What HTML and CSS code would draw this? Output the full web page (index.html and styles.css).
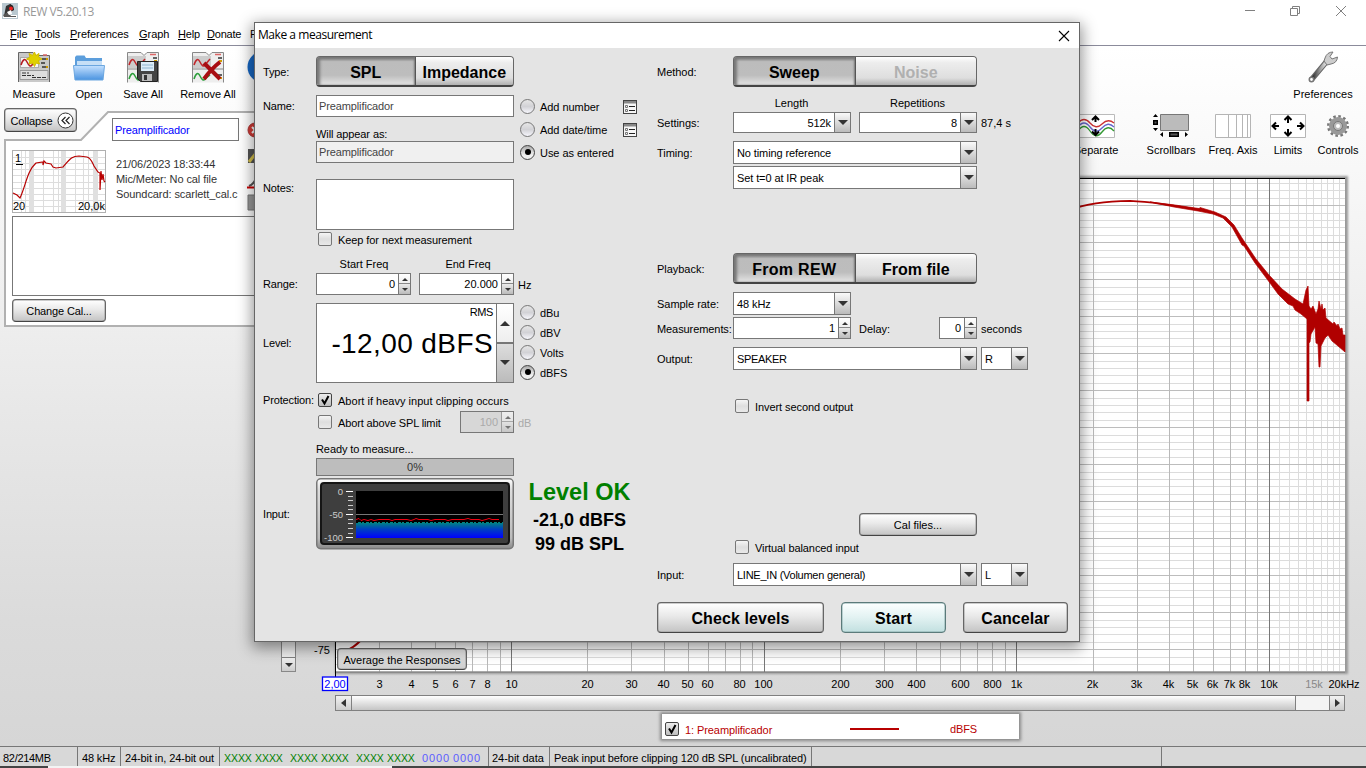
FILE: index.html
```html
<!DOCTYPE html>
<html lang="es">
<head>
<meta charset="utf-8">
<title>REW V5.20.13</title>
<link rel="stylesheet" href="styles.css">
</head>
<body>
<svg class="defs" aria-hidden="true">
  <defs>
    <linearGradient id="blue" x1="0" y1="0" x2="0" y2="1"><stop offset="0" stop-color="#c6e2ff"/><stop offset="1" stop-color="#4a93e0"/></linearGradient>
    <linearGradient id="metal" x1="0" y1="0" x2="1" y2="0"><stop offset="0" stop-color="#333"/><stop offset=".5" stop-color="#999"/><stop offset="1" stop-color="#eee"/></linearGradient>
    <symbol id="sheet" viewBox="0 0 32 32">
      <path d="M.5 31V1.500H15l3 3h13.500V31" fill="#c9c9c9" stroke="#666"/>
      <rect x="2.500" y="6.500" width="18" height="10" fill="#f4f4f4" stroke="#aaa"/>
      <path d="M3 14q3-9 6-3t5 3l5-6" fill="none" stroke="#b4191f" stroke-width="1.500"/>
      <path d="M24 8h4M23 12h4M24 16h4" stroke="#333" stroke-width="1.500"/>
      <path d="M28 8h2M28 16h2" stroke="#d09a00" stroke-width="2"/>
      <path d="M25 4h4" stroke="#d66" stroke-width="1.500"/>
    </symbol>
    <symbol id="sheets" viewBox="0 0 32 32">
      <path d="M.5 31.500V1.500H14l3 3 3-3h11.500v30" fill="#eee" stroke="#888"/>
      <rect x="1" y="5" width="18" height="12" fill="#ccc"/>
      <path d="M2 14q3-9 6-3t5 3l5-6" fill="none" stroke="#c0262b" stroke-width="1.500"/>
      <path d="M1 18h30" stroke="#888"/>
      <path d="M2 28q3-9 6-3t5 3l5-4" fill="none" stroke="#2b9e3a" stroke-width="1.500"/>
      <path d="M26 7h4M26 24h4" stroke="#333" stroke-width="1.500"/>
      <path d="M27 10h3M27 27h3" stroke="#d09a00" stroke-width="2"/>
      <path d="M23 3.500h6" stroke="#d66" stroke-width="1.500"/>
    </symbol>
    <symbol id="list" viewBox="0 0 14 14">
      <rect x=".5" y=".5" width="13" height="13" fill="#f6f6f6" stroke="#444"/>
      <rect x="1" y="1" width="12" height="2.500" fill="#888"/>
      <path d="M2.500 5.500h2v2h-2zM2.500 9.500h2v2h-2z" fill="none" stroke="#777"/>
      <path d="M6 6.500h6M6 10.500h6" stroke="#222"/>
    </symbol>
    <symbol id="tick" viewBox="0 0 15 15"><path d="M4 6.500L6.500 10.500 10.500 3" fill="none" stroke="#000" stroke-width="2"/></symbol>
  </defs>
</svg>

<div class="window">
  <header class="titlebar">
    <svg class="app-icon" width="16" height="16" viewBox="0 0 16 16"><rect width="16" height="16" fill="#b9c8d0"/><path d="M4 3l4-2 3 2 1 4-6 3-4 3 1-5z" fill="#333"/><path d="M8 1l3 2 1 4-3 1z" fill="#222"/><circle cx="9" cy="5.500" r="2" fill="#e22"/><path d="M1 12h14v3H1z" fill="#fff"/><path d="M1 12l5-3 3 4h5v1H2z" fill="#555"/><path d="M5 9l4-2 1 4-3 1z" fill="#fff"/></svg>
    <span class="app-title">REW V5.20.13</span>
    <svg class="win-buttons" width="106" height="14" viewBox="0 0 106 14" fill="none" stroke="#808080"><path d="M1 5.500h10M46.500 3.500h7v7h-7zM48.500 3V1.500h7v7h-2M92 1l10 10M102 1L92 11"/></svg>
  </header>
  <nav class="menubar">
    <span><u>F</u>ile</span><span><u>T</u>ools</span><span><u>P</u>references</span><span><u>G</u>raph</span><span><u>H</u>elp</span><span><u>D</u>onate</span><span>P</span>
  </nav>

  <main class="workspace">
    <div class="toolbar">
      <div class="tool t1"><svg width="32" height="32"><use href="#sheet"/><path d="M2 19.500h28v9H2z" fill="#dedede" stroke="#999"/><path d="M4 22h7M4 24.500h12M14 26.500h14" stroke="#333" stroke-dasharray="4 1"/><path d="M16.500 1l1.300 3.500L21 2.500l-.5 3.500 3.500 2-3.500 1.500 1 3.500-3.500-1-1.500 3.500-2-3.500-3.500 1 1-3.500L8.500 8 12 6l-1-3.500 3.500 2z" fill="#dfd000" stroke="#d3bd00" stroke-width="1"/></svg><span>Measure</span></div>
      <div class="tool t2"><svg width="32" height="32"><path d="M2 27V6l1.500-1.500h8L13 7h16v8z" fill="#5c9edc"/><path d="M4 10h25v5H4z" fill="#c6dff6"/><path d="M.5 14.500h31L30 29H2z" fill="url(#blue)" stroke="#6ba6df"/></svg><span>Open</span></div>
      <div class="tool t3"><svg width="32" height="32"><use href="#sheets"/><path d="M10.500 10.500h20v20h-17l-3-3z" fill="#444" stroke="#222"/><path d="M14 11h13v9H14z" fill="#dcecf8"/><path d="M15 14h11M15 17h11" stroke="#8fb4d0"/><path d="M15 23h10v7H15z" fill="#bbb"/><path d="M17 24h3v5h-3z" fill="#333"/></svg><span>Save All</span></div>
      <div class="tool t4"><svg width="32" height="32"><use href="#sheets"/><path d="M12 12L28 28M28 11Q19 18 12 28" stroke="#a80d12" stroke-width="4" fill="none"/></svg><span>Remove All</span></div>
      <div class="tool t5"><svg width="32" height="32"><circle cx="16" cy="16" r="15.500" fill="#1766c2"/></svg><span>I</span></div>
      <div class="tool tp"><svg width="32" height="32"><path d="M5 28L20 10" stroke="#666" stroke-width="5.500" stroke-linecap="round"/><path d="M6 27L20 10" stroke="url(#metal)" stroke-width="3.500"/><path d="M18 7Q20 1 26 1l-3 4.500 2 2.500 5.500-2Q30 12 24 13l-4 1-3-4z" fill="#ccc" stroke="#777"/><circle cx="4.500" cy="28.500" r="2.200" fill="#fff" stroke="#777" stroke-width="1.600"/></svg><span>Preferences</span></div>
    </div>

    <div class="content">
      <aside class="side">
        <svg class="tab-shape" width="260" height="222" viewBox="0 0 260 222"><path d="M5 218V32h76l27-28h160v214z" fill="#fff" stroke="#b1b1b1" stroke-width="2"/></svg>
        <div class="side-head">
          <button class="btn collapse">Collapse <svg width="17" height="17" viewBox="0 0 17 17"><circle cx="8.500" cy="8.500" r="7.500" fill="#fff" stroke="#333"/><path d="M8.500 5L5 8.500 8.500 12M12.500 5L9 8.500l3.500 3.500" fill="none" stroke="#222" stroke-width="1.200"/></svg></button>
          <div class="m-name">Preamplificador</div>
        </div>
        <div class="m-row">
          <svg class="thumb" width="94" height="63" viewBox="0 0 94 63">
            <rect x=".5" y=".5" width="93" height="62" fill="#fff" stroke="#b0b0b0"/>
            <path d="M1 7.500h92M1 13.500h92M1 19.500h92M1 25.500h92M1 32.500h92M1 38.500h92M1 44.500h92M1 50.500h92M1 56.500h92M9.500 1v61M13.500 1v61M31.500 1v61M41.500 1v61M46.500 1v61M63.500 1v61M71.500 1v61M76.500 1v61" stroke="#ddd"/>
            <path d="M19.500 1v61M51.500 1v61M83.500 1v61" stroke="#e0e0e0" stroke-width="5"/>
            <path d="M1 43l4 2 3 3C14 35 15 21 24 13l7-1v3l1-4 2 2 5 1 2 3 3 1 7-1C58 9 60 6 67 6l8 1c4 1 5 5 7 9l4 6 2 1v17l1-19 1 9 1-6 1 7 1 1" fill="none" stroke="#b80000" stroke-width="1.200"/>
            <g font-family="Liberation Sans, sans-serif" font-size="11"><text x="3" y="12">1</text><text x="1" y="60">20</text><text x="66" y="60">20,0k</text></g><path d="M4 14.500h7" stroke="#000"/>
          </svg>
          <div class="m-info"><span>21/06/2023 18:33:44</span><span>Mic/Meter: No cal file</span><span>Soundcard: scarlett_cal.c</span></div>
          <svg class="m-icons" width="14" height="92" viewBox="0 0 14 92"><circle cx="8" cy="9" r="7" fill="#d53a35" stroke="#a33"/><path d="M5 6l6 6M11 6l-6 6" stroke="#fff" stroke-width="2"/><path d="M1 28h13v14H1z" fill="#555"/><path d="M2 41l11-14" stroke="#d8c34d" stroke-width="3"/><path d="M2 65q5-2 7-8" fill="none" stroke="#555" stroke-width="2"/><path d="M0 66.500h14" stroke="#c00" stroke-width="2"/><path d="M1 74h13v15H1z" fill="#999" stroke="#777"/></svg>
        </div>
        <div class="m-notes"></div>
        <button class="btn change">Change Cal...</button>
        <div class="vscroll"><i class="down"></i></div>
      </aside>

      <section class="graph">
        <div class="graph-tools">
          <div class="tool"><svg width="38" height="26"><path d="M.5 1.500h37v23H.5z" fill="#fff" stroke="#bbb"/><path d="M1 10q6-7 12 0t12 1 12-1" fill="none" stroke="#c33" stroke-width="1.300"/><path d="M1 14q6-8 12 0t12 1 12-1" fill="none" stroke="#66c" stroke-width="1.300"/><path d="M1 18q6-9 12 0t12 1 12-1" fill="none" stroke="#393" stroke-width="1.300"/><path d="M18.500 9V4M15 7l3.500-3.500L22 7M18.500 16v6M15 18.500l3.500 3.500 3.500-3.500" fill="none" stroke="#000" stroke-width="2"/></svg><span>Separate</span></div>
          <div class="tool"><svg width="38" height="26"><path d="M8.500 1.500h28v16h-28z" fill="#bbb" stroke="#777"/><path d="M1 4l2.500-3L6 4zM1 15l2.500 3L6 15zM11 19v5l-3-2.500zM33 19v5l3-2.500zM1 7h5v5H1zM17 19h10v5H17z" fill="#000"/><path d="M2.500 8.500h2v2h-2zM18.500 20.500h7v2h-7z" fill="#555"/></svg><span>Scrollbars</span></div>
          <div class="tool"><svg width="36" height="26"><path d="M.5 1.500h35v23H.5zM13.500 2v22M21.500 2v22M27.500 2v22M32.500 2v22" fill="#fff" stroke="#b5b5b5"/></svg><span>Freq. Axis</span></div>
          <div class="tool"><svg width="36" height="26"><path d="M.5 1.500h35v23H.5z" fill="#fff" stroke="#b5b5b5"/><path d="M18 10V4M14.500 7L18 3.500 21.500 7M18 16v6M14.500 19l3.500 3.500 3.500-3.500M9 13H3M6 9.500L2.500 13 6 16.500M27 13h6M30 9.500l3.500 3.500-3.500 3.500" fill="none" stroke="#000" stroke-width="2"/></svg><span>Limits</span></div>
          <div class="tool"><svg width="24" height="26" viewBox="0 0 24 26"><circle cx="12" cy="13" r="9.700" fill="none" stroke="#777" stroke-width="2.600" stroke-dasharray="2.540 2.540"/><circle cx="12" cy="13" r="6.500" fill="#ddd" stroke="#999" stroke-width="5"/><circle cx="12" cy="13" r="4.500" fill="#bbb" stroke="#777"/><circle cx="12" cy="13" r="2" fill="#fff"/></svg><span>Controls</span></div>
        </div>
        <div class="plot-wrap">
          <svg class="plot" width="1066" height="526" viewBox="300 170 1066 526">
            <defs>
              <pattern id="rows" x="0" y="205" width="37" height="37" patternUnits="userSpaceOnUse"><path d="M0 8.500h37M0 15.500h37M0 22.500h37M0 30.500h37" stroke="#dcdcdc"/><path d="M0 .5h37" stroke="#bdbdbd"/></pattern>
              <filter id="soft" x="-5%" y="-5%" width="110%" height="110%"><feGaussianBlur stdDeviation="1.200"/></filter>
            </defs>
            <rect x="335" y="176" width="1013" height="498" fill="#999" filter="url(#soft)"/>
            <rect x="336" y="178" width="1009" height="494" fill="#fff"/>
            <path d="M1279.500 178v494M1289.500 178v494M1298.500 178v494M1306.500 178v494M1313.500 178v494M1321.500 178v494M1327.500 178v494M1333.500 178v494M1339.500 178v494" stroke="#dcdcdc"/>
            <rect x="336" y="178" width="1009" height="494" fill="url(#rows)"/>
            <path d="M379.500 178v494M411.500 178v494M435.500 178v494M455.500 178v494M472.500 178v494M487.500 178v494M500.500 178v494M587.500 178v494M631.500 178v494M664.500 178v494M688.500 178v494M708.500 178v494M725.500 178v494M740.500 178v494M752.500 178v494M840.500 178v494M884.500 178v494M916.500 178v494M940.500 178v494M960.500 178v494M977.500 178v494M992.500 178v494M1005.500 178v494M1093.500 178v494M1137.500 178v494M1169.500 178v494M1193.500 178v494M1213.500 178v494M1230.500 178v494M1245.500 178v494M1257.500 178v494" stroke="#b9b9b9"/>
            <path d="M511.500 178v494M764.500 178v494M1016.500 178v494M1269.500 178v494" stroke="#777"/>
            <path d="M336 178.500h1009" stroke="#000"/><path d="M335.500 178v506" stroke="#000"/><path d="M336 672h1009" stroke="#777"/>
            <path d="M345 651q9-3 17-12" fill="none" stroke="#b00000" stroke-width="2"/>
            <path d="M1070 210Q1092 201 1130 200.800Q1157 202 1200 210" fill="none" stroke="#b00000" stroke-width="1.800"/>
            <path d="M1150 202L1175 205 1199 208.500 1200 207.500 1215 212 1226 217 1234 225 1242 238 1256 259 1269 275 1282 289 1295 299 1303 304 1306 290 1308 286 1309 306 1311 309 1313 306 1316 314 1318 309 1319 301 1321 309 1322 304 1323 310 1325 308 1326 318 1333 324 1334 322 1337 326 1338 324 1340 329 1342 328 1343 335 1345 335V352L1338 346 1332 341 1328 335 1325 338 1323 342 1321 346 1320 367 1319 367 1318 344 1316 343 1315 327 1311 334 1310 342 1309 343V401H1307V319L1301 314 1295 310 1293 306 1288 304 1278 294 1267 279 1255 263 1244 246 1242 245 1232 227 1223 218 1213 214 1198 211 1174 207z" fill="#b00000" stroke="#b00000" stroke-width=".7"/>
            <g class="ticks">
              <text x="322" y="654" text-anchor="middle">-75</text>
              <rect x="322.500" y="677" width="25" height="13.500" fill="#fff" stroke="#00f" stroke-width="1.300"/><text x="335" y="688" text-anchor="middle" fill="#00f">2,00</text>
              <g text-anchor="middle">
              <text x="379.500" y="688">3</text><text x="411.500" y="688">4</text><text x="435.500" y="688">5</text><text x="455.500" y="688">6</text><text x="472.500" y="688">7</text><text x="487.500" y="688">8</text><text x="511.500" y="688">10</text><text x="587.500" y="688">20</text><text x="631.500" y="688">30</text><text x="663.500" y="688">40</text><text x="687.500" y="688">50</text><text x="707.500" y="688">60</text><text x="739.500" y="688">80</text><text x="763.500" y="688">100</text><text x="840.500" y="688">200</text><text x="884.500" y="688">300</text><text x="916.500" y="688">400</text><text x="960.500" y="688">600</text><text x="992.500" y="688">800</text><text x="1016.500" y="688">1k</text><text x="1092.500" y="688">2k</text><text x="1136.500" y="688">3k</text><text x="1168.500" y="688">4k</text><text x="1192.500" y="688">5k</text><text x="1212.500" y="688">6k</text><text x="1229.500" y="688">7k</text><text x="1244.500" y="688">8k</text><text x="1269" y="688">10k</text><text x="1314" y="688" fill="#888">15k</text><text x="1344" y="688">20kHz</text></g>
            </g>
          </svg>
          <button class="btn average">Average the Responses</button>
        </div>
        <div class="hscroll"><i class="left-arrow"></i><b></b><i class="right-arrow"></i></div>
        <div class="legend"><span class="check on"><svg width="15" height="15"><use href="#tick"/></svg></span><span class="l-name">1: Preamplificador</span><i></i><span>dBFS</span></div>
      </section>
    </div>
  </main>

  <footer class="status">
    <span class="s1">82/214MB</span><span class="s2">48 kHz</span><span class="s3">24-bit in, 24-bit out</span>
    <span class="bits"><b>XXXX</b><b>XXXX</b><b class="far">XXXX</b><b>XXXX</b><b class="far">XXXX</b><b>XXXX</b><em class="far">0000</em><em>0000</em></span>
    <span class="s5">24-bit data</span><span class="s6">Peak input before clipping 120 dB SPL (uncalibrated)</span><span class="s7"></span>
  </footer>
  <div class="taskbar"><i></i></div>
</div>

<div class="dialog">
  <header class="dlg-title"><span>Make a measurement</span><svg width="12" height="12" viewBox="0 0 12 12"><path d="M1 1l10 10M11 1L1 11" stroke="#000" stroke-width="1.100"/></svg></header>
  <div class="dlg-body">
    <section class="left">
      <div class="row h31"><label>Type:</label><div class="seg w198"><b class="on">SPL</b><b>Impedance</b></div></div>
      <div class="row name-row">
        <div class="name-grid">
          <label>Name:</label><div class="field dim">Preamplificador</div>
          <span></span><span class="cap">Will appear as:</span>
          <span></span><div class="field dim ro">Preamplificador</div>
        </div>
        <div class="radios r-name">
          <div><i class="radio"></i><span>Add number</span><svg class="list" width="14" height="14"><use href="#list"/></svg></div>
          <div><i class="radio"></i><span>Add date/time</span><svg class="list" width="14" height="14"><use href="#list"/></svg></div>
          <div><i class="radio on"></i><span>Use as entered</span></div>
        </div>
      </div>
      <div class="row notes"><label>Notes:</label><div class="area"></div></div>
      <div class="row indent keep"><span class="check"></span><span>Keep for next measurement</span></div>
      <div class="row caps freq"><span>Start Freq</span><span>End Freq</span></div>
      <div class="row h22"><label>Range:</label><div class="spin w95"><span>0</span><i></i></div><div class="spin w95 gap8"><span>20.000</span><i></i></div><span class="unit">Hz</span></div>
      <div class="row level"><label>Level:</label><div class="lvl"><div><small>RMS</small><strong>-12,00 dBFS</strong></div><i></i></div>
        <div class="radios r-unit"><div><i class="radio"></i><span>dBu</span></div><div><i class="radio"></i><span>dBV</span></div><div><i class="radio"></i><span>Volts</span></div><div><i class="radio on"></i><span>dBFS</span></div></div></div>
      <div class="row prot"><label>Protection:</label><span class="check on"><svg width="15" height="15"><use href="#tick"/></svg></span><span>Abort if heavy input clipping occurs</span></div>
      <div class="row indent h22"><span class="check"></span><span class="abort">Abort above SPL limit</span><div class="spin off"><span>100</span><i></i></div><span class="unit off">dB</span></div>
      <div class="row ready">Ready to measure...</div>
      <div class="progress">0%</div>
      <div class="row meter-row"><label>Input:</label>
        <svg width="198" height="72" viewBox="0 0 198 72">
          <defs><linearGradient id="frame" x1="0" y1="0" x2="0" y2="1"><stop offset="0" stop-color="#fff"/><stop offset=".15" stop-color="#ddd"/><stop offset=".85" stop-color="#bbb"/><stop offset="1" stop-color="#888"/></linearGradient><linearGradient id="sig" x1="0" y1="0" x2="0" y2="1"><stop offset="0" stop-color="#008c7c"/><stop offset=".45" stop-color="#0040c0"/><stop offset="1" stop-color="#00f"/></linearGradient></defs>
          <rect x=".75" y=".75" width="196.500" height="70" rx="4" fill="url(#frame)" stroke="#777" stroke-width="1.500"/>
          <rect x="5" y="5" width="188" height="61" rx="3" fill="#3e3e3e" stroke="#151515" stroke-width="2"/>
          <path d="M40 13h147v47H40z"/><path d="M40 44h147v16H40z" fill="url(#sig)"/><path d="M40 36.500h147" stroke="#777"/>
          <path d="M40 41.500l3-1 2 2 3-1 4 1 3-1 3 1 5-1h10l3 1 3-1h12l4 1 3-1 2-1 3 1h9l3 1 4-1h10l3 1 4-1h12l4-1 3 1h8l3 1 4-1 3-1 3 1h7" fill="none" stroke="#f00010"/>
          <path d="M40 44.500h147" stroke="#000" stroke-dasharray="2 3 1 2"/>
          <path d="M30 13.500h7M30 36.500h7M30 59.500h7" stroke="#fff"/><path d="M32 18.500h5M32 22.500h5M32 27.500h5M32 31.500h5M32 41.500h5M32 45.500h5M32 50.500h5M32 55.500h5" stroke="#ccc"/>
          <g font-family="Liberation Sans, sans-serif" font-size="9.500" fill="#ccc" text-anchor="end"><text x="27" y="17">0</text><text x="27" y="40">-50</text><text x="27" y="63">-100</text></g>
        </svg>
        <div class="reading"><b class="ok">Level OK</b><b>-21,0 dBFS</b><b>99 dB SPL</b></div>
      </div>
    </section>

    <section class="right">
      <div class="row h31"><label>Method:</label><div class="seg w244"><b class="on">Sweep</b><b class="off">Noise</b></div></div>
      <div class="row caps len"><span>Length</span><span>Repetitions</span></div>
      <div class="row h21"><label>Settings:</label><div class="combo num w118"><span>512k</span><i></i></div><div class="combo num w118 gap8"><span>8</span><i></i></div><span class="unit">87,4 s</span></div>
      <div class="row timing"><label>Timing:</label><div class="combo w244"><span>No timing reference</span><i></i></div></div>
      <div class="row ir"><label></label><div class="combo w244"><span>Set t=0 at IR peak</span><i></i></div></div>
      <div class="row h31 playback"><label>Playback:</label><div class="seg w244 wide"><b class="on">From REW</b><b>From file</b></div></div>
      <div class="row rate"><label>Sample rate:</label><div class="combo w118"><span>48 kHz</span><i></i></div></div>
      <div class="row meas"><label>Measurements:</label><div class="spin w118"><span>1</span><i></i></div><span class="delay">Delay:</span><div class="spin w38"><span>0</span><i></i></div><span class="unit">seconds</span></div>
      <div class="row out"><label>Output:</label><div class="combo w244"><span class="caps-text">SPEAKER</span><i></i></div><div class="combo ch"><span>R</span><i></i></div></div>
      <div class="row indent invert"><span class="check"></span><span>Invert second output</span></div>
      <div class="row cal"><button class="btn">Cal files...</button></div>
      <div class="row indent virt"><span class="check"></span><span>Virtual balanced input</span></div>
      <div class="row in"><label>Input:</label><div class="combo w244"><span class="line-in">LINE_IN (Volumen general)</span><i></i></div><div class="combo ch"><span>L</span><i></i></div></div>
      <div class="actions"><button class="btn big levels">Check levels</button><button class="btn big start">Start</button><button class="btn big cancel">Cancelar</button></div>
    </section>
  </div>
</div>
</body>
</html>
```

FILE: styles.css
```css
* { box-sizing: border-box; }
body { margin: 0; width: 1366px; height: 768px; overflow: hidden; position: relative; font: 11px/13px "Liberation Sans", Arial, sans-serif; color: #000; background: #fff; white-space: nowrap; }
.defs { position: absolute; width: 0; height: 0; }
svg { display: block; flex: none; }
button { font: inherit; color: inherit; padding: 0; }
.window { height: 768px; display: flex; flex-direction: column; }

.titlebar { height: 24px; flex: none; display: flex; align-items: center; padding: 0 16px 0 2px; }
.app-icon { margin-top: -2px; }
.app-title { margin-left: 5px; color: #999; font: 12px/16px "Open Sans", sans-serif; letter-spacing: -.42px; flex: 1; }
.win-buttons { margin-top: -1px; }
.menubar { height: 22px; flex: none; display: flex; gap: 9px; padding: 4px 10px 0; border-bottom: 1px solid #8b8b9b; }
.menubar span { letter-spacing: -.05px; }
.menubar span:nth-child(1) { width: 16px; }
.menubar span:nth-child(2) { width: 26px; letter-spacing: -.1px; }
.menubar span:nth-child(3) { width: 60px; }
.menubar span:nth-child(4) { width: 30px; }
.menubar span:nth-child(5) { width: 20px; letter-spacing: -.2px; }
.menubar span:nth-child(6) { width: 34px; letter-spacing: -.2px; }

.workspace { flex: 1; min-height: 0; background: linear-gradient(#fff 0, #f7f7f7 20%, #e8e8e8 52%, #dbdbdb 82%, #d6d6d6 100%); }
.toolbar { height: 62px; display: flex; padding-top: 5px; }
.tool { display: flex; flex-direction: column; align-items: center; }
.tool span { margin-top: 5px; }
.toolbar .tool { flex: none; }
.t1 { width: 68px; }
.t2 { width: 42px; }
.t3 { width: 66px; }
.t4 { width: 64px; }
.t5 { width: 46px; }
.t5 span { margin-left: -14px; }
.tp { width: 66px; margin-left: auto; margin-right: 10px; }
.content { display: flex; height: 638px; }
.side { width: 300px; flex: none; position: relative; }
.tab-shape { position: absolute; left: 0; top: 0; }
.side-head { position: relative; display: flex; height: 34px; }
.btn { border: 1px solid #666; border-bottom-color: #444; border-radius: 4px; background: linear-gradient(#fff, #e9e9e9 45%, #c4c4c4); display: flex; align-items: center; justify-content: center; box-shadow: inset 0 0 0 .5px #999; }
.collapse { width: 73px; height: 24px; margin-left: 4px; gap: 4px; padding: 2px 0 0 3px; letter-spacing: -.1px; }
.collapse svg { margin-top: -2px; }
.m-name { margin: 10px 0 0 35px; width: 127px; height: 23px; border: 1px solid #777; padding: 5px 2px; color: #00f; background: #fff; letter-spacing: -.12px; }
.m-row { position: relative; display: flex; height: 74px; padding: 8px 0 0 12px; }
.m-info { width: 134px; margin: 7px 0 0 10px; display: flex; flex-direction: column; color: #333; line-height: 15px; overflow: hidden; letter-spacing: -.08px; }
.m-icons { margin: -29px 0 0 -3px; }
.m-notes { position: relative; width: 260px; height: 80px; margin-left: 12px; border: 1px solid #777; background: #fff; }
.change { position: relative; width: 94px; height: 23px; margin: 3px 0 0 12px; padding-top: 1px; letter-spacing: -.15px; }
.vscroll { width: 15px; height: 346px; margin: 4px 0 0 281px; border: 1px solid #888; background: #eee; display: flex; align-items: flex-end; position: relative; }

.graph { width: 1066px; flex: none; }
.graph-tools { display: flex; height: 62px; padding: 5px 8px 0 0; justify-content: flex-end; }
.graph-tools .tool:nth-child(1) { width: 48px; margin-right: 26px; }
.graph-tools .tool:nth-child(2) { width: 50px; margin-right: 12px; }
.graph-tools .tool:nth-child(3) { width: 50px; margin-right: 10px; }
.graph-tools .tool:nth-child(4) { width: 36px; margin-right: 12px; margin-left: 2px; }
.graph-tools .tool:nth-child(5) { width: 40px; }
.plot-wrap { position: relative; height: 526px; }
.ticks { font: 11px "Liberation Sans", Arial, sans-serif; }
.average { position: absolute; left: 37px; top: 478px; width: 130px; height: 22px; padding-top: 2px; background: linear-gradient(#e4e4e4, #cfcfcf); }
.hscroll { width: 1010px; height: 16px; margin: -1px 0 0 35px; display: flex; border: 1px solid #808080; background: #f4f4f4; }
.hscroll i, .vscroll i { width: 15px; height: 14px; flex: none; background: linear-gradient(#f2f2f2, #ccc); display: flex; align-items: center; justify-content: center; }
.hscroll b { width: 945px; background: linear-gradient(#fff, #c5c5c5); border: solid #808080; border-width: 0 1px; }
.hscroll .right-arrow { margin-left: auto; border-left: 1px solid #808080; }
.hscroll i::after, .vscroll i::after { content: ""; border: solid transparent; border-width: 4px 5px 4px 0; border-right-color: #333; }
.hscroll .right-arrow::after { border-width: 4px 0 4px 5px; border-left-color: #333; }
.vscroll i { border-top: 1px solid #808080; width: 13px; }
.vscroll i::after { border-width: 4px 4px 0; border-color: #333 transparent transparent; }
.legend { width: 357px; height: 25px; margin: 3px 0 0 362px; background: #fff; display: flex; align-items: center; padding: 5px 0 0 3px; box-shadow: 0 0 3px 2px #888; color: #b80000; letter-spacing: -.1px; }
.legend .l-name { width: 165px; margin-left: 6px; padding-top: 2px; }
.legend i { width: 49px; height: 2px; background: #b80000; margin-right: 51px; }
.legend > span:last-child { padding-top: 1px; }

.status { height: 20px; flex: none; display: flex; border-top: 1px solid #777; background: #d8d8d8; line-height: 23px; }
.status > span { border-right: 1px solid #777; padding-left: 3px; flex: none; }
.status > .s1 { width: 78px; letter-spacing: -.3px; }
.status > .s2 { width: 43px; padding-left: 4px; letter-spacing: -.15px; }
.status > .s3 { width: 99px; padding-left: 4px; letter-spacing: -.1px; }
.status > .bits { width: 269px; display: flex; gap: 3px; padding-left: 4px; }
.bits b, .bits em { width: 28px; font-style: normal; font-weight: normal; color: #008000; font-size: 10.500px; letter-spacing: -.05px; }
.bits em { color: #5b5bff; font-size: 11px; letter-spacing: .9px; }
.bits .far { margin-left: 4px; }
.status > .s5 { width: 61px; letter-spacing: -.02px; }
.status > .s6 { width: 262px; padding-left: 4px; letter-spacing: -.11px; }
.status > .s7 { width: 350px; }
.taskbar { height: 2px; flex: none; background: #444; }
.taskbar i { display: block; margin-left: 48px; width: 344px; height: 2px; background: #f4f4f4; }

.dialog { position: absolute; left: 254px; top: 22px; width: 826px; height: 620px; border: 1px solid #666; background: #e4e4e4; box-shadow: 0 4px 14px 2px rgba(0,0,0,.42); }
.dlg-title { height: 25px; background: #fff; display: flex; justify-content: space-between; align-items: center; padding: 0 9px 0 3px; font: 12px/16px "Open Sans", sans-serif; letter-spacing: -.45px; }
.dlg-title span { margin-top: -2px; }
.dlg-body { display: flex; padding: 8px 0 0 8px; }
.left { width: 394px; flex: none; }
.right { width: 412px; }
.row { display: flex; align-items: center; }
.row > label, .name-grid label { width: 53px; flex: none; letter-spacing: -.15px; }
.row.h31 > label { padding-top: 2px; }
.right .row > label { width: 76px; letter-spacing: -.03px; padding-top: 2px; }
.h31 { height: 31px; }
.h22 { height: 22px; }
.h21 { height: 21px; }
.w198 { width: 198px; }
.w244 { width: 244px; }
.w95 { width: 95px; }
.w118 { width: 118px; }
.w38 { width: 38px; }
.gap8 { margin-left: 8px; }
.seg { height: 31px; display: flex; border: 1px solid #666; border-bottom: 2px solid #444; border-radius: 4px; overflow: hidden; font-size: 16px; box-shadow: inset 0 0 0 1px #999; }
.seg b { flex: 1 1 0; display: flex; align-items: center; justify-content: center; background: linear-gradient(#fff 0, #ededed 20%, #dedede 75%, #b0b0b0); padding-top: 2px; }
.seg b.on { background: linear-gradient(#858585, #bcbcbc 16%, #bdbdbd 65%, #e4e4e4); border-right: 1px solid #555; box-shadow: inset 3px 2px 3px #777, inset -1px 0 2px #777; }
.seg b.off { color: #b0b0b0; }
.wide { letter-spacing: .3px; }
.wide b + b { letter-spacing: 0; }
.field { height: 22px; border: 1px solid #777; background: #fff; padding: 4px 2px; color: #444; letter-spacing: -.12px; }
.field.ro { background: #f0f0f0; }
.name-row { height: 68px; margin-top: 8px; }
.name-grid { display: grid; grid-template-columns: 53px 198px; grid-template-rows: 22px 24px 22px; align-items: center; }
.cap { padding-top: 10px; letter-spacing: -.1px; }
.radios { display: flex; flex-direction: column; }
.radios div { display: flex; align-items: center; }
.radios span { margin-left: 5px; padding-top: 2px; letter-spacing: -.05px; }
.r-name { margin: 1px 0 0 6px; height: 68px; }
.r-name div { height: 22.800px; width: 117px; }
.list { margin-left: auto; }
.radio { width: 15px; height: 15px; flex: none; border: 1px solid #777; border-radius: 50%; background: linear-gradient(#e6e6e6, #d2d2d6 50%, #f6f6fc); display: grid; place-items: center; }
.radio.on { border-color: #444; background: linear-gradient(#aaa, #f0f0f0 70%); }
.radio.on::after { content: ""; width: 6px; height: 6px; border-radius: 50%; background: #000; }
.notes { height: 51px; margin-top: 16px; align-items: flex-start; }
.notes label { margin-top: 3px; }
.area { width: 198px; height: 51px; border: 1px solid #777; background: #fff; }
.check { width: 14px; height: 14px; flex: none; border: 1px solid #777; border-radius: 2px; background: linear-gradient(#f5f5f5, #dedede 50%, #e9e9e9); }
.check.on { border-color: #444; background: linear-gradient(#ececec, #bdbdbd); }
.check svg { margin: -1px; overflow: visible; }
.indent { padding-left: 55px; }
.check + span { margin-left: 6px; padding-top: 2px; letter-spacing: -.08px; }
.prot .check + span { letter-spacing: .02px; }
.keep { height: 16px; margin-top: 1px; }
.caps span { text-align: center; }
.freq { height: 13px; margin: 11px 0 2px; padding-left: 53px; }
.freq span { width: 96px; }
.freq span + span { margin-left: 8px; }
.spin, .combo { display: flex; flex: none; border: 1px solid #777; background: #fff; height: 22px; align-items: center; }
.spin > span { flex: 1; text-align: right; padding-right: 3px; }
.spin > i { width: 12px; height: 20px; border-left: 1px solid #777; background: linear-gradient(#fff, #eee 47%, #888 47%, #888 52%, #e8e8e8 52%, #bbb); display: flex; flex-direction: column; justify-content: space-around; align-items: center; }
.spin > i::before, .lvl > i::before { content: ""; border: solid transparent; border-width: 0 3px 3px; border-bottom-color: #333; }
.spin > i::after, .lvl > i::after { content: ""; border: solid transparent; border-width: 3px 3px 0; border-top-color: #333; }
.unit { margin-left: 4px; padding-top: 2px; }
.level { height: 80px; margin-top: 8px; }
.lvl { width: 198px; height: 80px; display: flex; background: #fff; border: 1px solid #777; }
.lvl div { flex: 1; display: flex; flex-direction: column; text-align: right; padding: 2px 3px 0 0; }
.lvl small { font-size: 11px; letter-spacing: -.4px; }
.lvl strong { font: 28px/32px "Liberation Sans", sans-serif; margin-top: 9px; letter-spacing: .4px; }
.lvl > i { width: 17px; border-left: 1px solid #777; background: linear-gradient(#fff, #eee 49%, #777 49%, #777 51%, #ddd 51%, #bbb); display: flex; flex-direction: column; justify-content: space-around; align-items: center; }
.lvl > i::before { border-width: 0 5px 5px; }
.lvl > i::after { border-width: 5px 5px 0; }
.r-unit { margin: -2px 0 0 6px; }
.r-unit div { height: 20px; }
.prot { height: 16px; margin-top: 9px; margin-bottom: 3px; }
.row.prot > .check { margin-left: 2px; }
.indent .abort { flex: none; width: 122px; letter-spacing: -.13px; }
.spin.off { width: 54px; background: #d7d7d7; color: #aaa; }
.spin.off > i { opacity: .6; }
.unit.off { color: #aaa; }
.ready { height: 13px; padding-left: 53px; margin-top: 10px; letter-spacing: -.08px; }
.progress { width: 198px; height: 18px; margin: 2px 0 0 53px; border: 1px solid #777; background: #bdbdbd; color: #333; text-align: center; line-height: 17px; }
.meter-row { height: 72px; margin-top: 2px; }
.reading { width: 131px; display: flex; flex-direction: column; align-items: center; font-size: 18px; line-height: 24px; padding-top: 4px; }
.ok { font-size: 23.500px; color: #008000; line-height: 31px; }

.len { height: 13px; margin: 10px 0 2px; padding-left: 76px; }
.len span { width: 117px; }
.len span + span { margin-left: 9px; }
.combo { height: 23px; }
.combo > span { flex: 1; padding-left: 3px; padding-top: 2px; letter-spacing: -.1px; }
.combo > .line-in { letter-spacing: -.25px; }
.combo > .caps-text { letter-spacing: -.35px; }
.combo > i { width: 16px; height: 100%; border-left: 1px solid #777; background: linear-gradient(#fafafa, #bbb); display: grid; place-items: center; }
.combo > i::after { content: ""; border: solid transparent; border-width: 5px 5px 0; border-top-color: #333; }
.combo.num { height: 21px; }
.num > span { text-align: right; padding-right: 3px; }
.timing { height: 23px; margin-top: 8px; }
.ir { height: 23px; margin-top: 2px; }
.playback { margin-top: 64px; }
.rate { height: 23px; margin-top: 8px; }
.meas { height: 22px; margin-top: 2px; }
.right .meas > label { letter-spacing: -.08px; }
.delay { width: 80px; margin-left: 8px; padding-top: 2px; }
.out { height: 23px; margin-top: 8px; }
.ch { width: 47px; margin-left: 4px; }
.right .indent { padding-left: 78px; }
.invert { height: 16px; margin-top: 28px; }
.cal { height: 23px; margin-top: 99px; padding-left: 202px; }
.cal .btn { width: 118px; height: 23px; padding-top: 2px; }
.virt { height: 16px; margin-top: 3px; }
.in { height: 23px; margin-top: 8px; }
.actions { display: flex; margin-top: 16px; height: 31px; }
.big { height: 31px; font-weight: bold; font-size: 16px; letter-spacing: .1px; padding-top: 2px; }
.levels { width: 167px; margin-right: 17px; }
.start { width: 105px; margin-right: 17px; border-color: #5b7a7a; background: linear-gradient(#fcffff, #e2f2f2 50%, #c2e0e0); box-shadow: inset 0 0 0 .5px #8aa; }
.cancel { width: 105px; }
```
